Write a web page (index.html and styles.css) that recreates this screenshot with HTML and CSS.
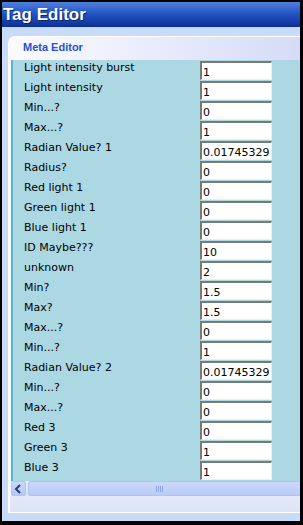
FILE: index.html
```html
<!DOCTYPE html>
<html>
<head>
    <meta charset="UTF-8">
    <title>Tag Editor</title>
    <link rel="stylesheet" href="styles.css">
</head>
<body>
    <div class="window">
        <div class="titlebar">Tag Editor</div>
        <div class="frame">
            <div class="tabpanel">
                <div class="tabhead">Meta Editor</div>
                <div class="content" id="rows"></div>
                <div class="hscroll">
                    <div class="sbtn"><svg width="9" height="10" viewBox="0 0 9 10"><path d="M6 1 L2 5 L6 9" fill="none" stroke="#2a3f7a" stroke-width="2"/></svg></div>
                    <div class="thumb"><span class="grip"></span></div>
                </div>
                <div class="footer"></div>
            </div>
        </div>
    </div>
    <script>
        let rows = document.getElementById('rows');
        [
            ['Light intensity burst', '1'],
            ['Light intensity', '1'],
            ['Min...?', '0'],
            ['Max...?', '1'],
            ['Radian Value? 1', '0.01745329'],
            ['Radius?', '0'],
            ['Red light 1', '0'],
            ['Green light 1', '0'],
            ['Blue light 1', '0'],
            ['ID Maybe???', '10'],
            ['unknown', '2'],
            ['Min?', '1.5'],
            ['Max?', '1.5'],
            ['Max...?', '0'],
            ['Min...?', '1'],
            ['Radian Value? 2', '0.01745329'],
            ['Min...?', '0'],
            ['Max...?', '0'],
            ['Red 3', '0'],
            ['Green 3', '1'],
            ['Blue 3', '1']
        ].forEach(([label, value]) => {
            rows.innerHTML += `<div class="row"><span class="label">${label}</span><input class="field" value="${value}"></div>`;
        });
    </script>
</body>
</html>
```

FILE: styles.css
```css
body {
    margin: 0;
    background: #000;
    font-family: "DejaVu Sans", Verdana, sans-serif;
}
.window {
    width: 303px;
    height: 525px;
    box-sizing: border-box;
    padding: 2px 3px 4px 2px;
    background: #000;
    display: flex;
    flex-direction: column;
}
.titlebar {
    height: 25px;
    background: linear-gradient(#4f80dc, #2556c4 45%, #0c2f98);
    color: #fff;
    font: bold 17px "Liberation Sans", Tahoma, sans-serif;
    line-height: 25px;
    padding-left: 1px;
    text-shadow: 1px 1px 0 #0a2468;
}
.frame {
    flex: 1;
    background: #c6dcf8;
    padding: 9px 0 8px 6px;
    display: flex;
}
.tabpanel {
    flex: 1;
    border-left: 1px solid #fff;
    border-top: 1px solid #fff;
    border-top-left-radius: 7px;
    background: linear-gradient(90deg, #fbfbfe, #d6dcf8);
    display: flex;
    flex-direction: column;
}
.tabhead {
    height: 23px;
    padding-left: 14px;
    font: bold 11px "Liberation Sans", Tahoma, sans-serif;
    line-height: 20px;
    color: #2850d0;
}
.content {
    height: 421px;
    margin-left: 2px;
    padding-top: 1px;
    box-sizing: border-box;
    background: #acd8e4;
    border-left: 2px solid #5fb3c9;
}
.row {
    display: flex;
    height: 20px;
}
.label {
    width: 176px;
    padding-left: 11px;
    font-size: 11px;
    line-height: 13px;
    color: #000;
}
.field {
    width: 72px;
    height: 19px;
    box-sizing: border-box;
    margin: 0;
    padding: 2px 0 0 1px;
    border-style: solid;
    border-width: 2px 1px 1px 2px;
    border-color: #7c7a70 #f2eee0 #f2eee0 #7c7a70;
    background: #fff;
    font: 11px "DejaVu Sans", Verdana, sans-serif;
    color: #000;
    outline: none;
}
.hscroll {
    height: 15px;
    margin-left: 2px;
    display: flex;
    gap: 2px;
    background: linear-gradient(#e8eefc, #d8e2fa);
}
.sbtn {
    width: 13px;
    height: 13px;
    border: 1px solid #b4c6ee;
    border-radius: 2px;
    background: linear-gradient(#c8d8fa, #b4c8f4);
    display: flex;
    align-items: center;
    justify-content: center;
}
.thumb {
    flex: 1;
    border: 1px solid #b0c4f0;
    border-right: none;
    border-radius: 3px 0 0 3px;
    background: linear-gradient(#cad9fb, #b9ccf6);
    display: flex;
    align-items: center;
    justify-content: center;
}
.grip {
    width: 8px;
    height: 6px;
    margin-right: 10px;
    background: repeating-linear-gradient(90deg, #8ea6dc 0 1px, transparent 1px 2px);
}
.footer {
    flex: 1;
    margin-left: 1px;
    border-bottom: 1px solid #fff;
    background: linear-gradient(#e4e8f8, #dee4f8);
}
```
